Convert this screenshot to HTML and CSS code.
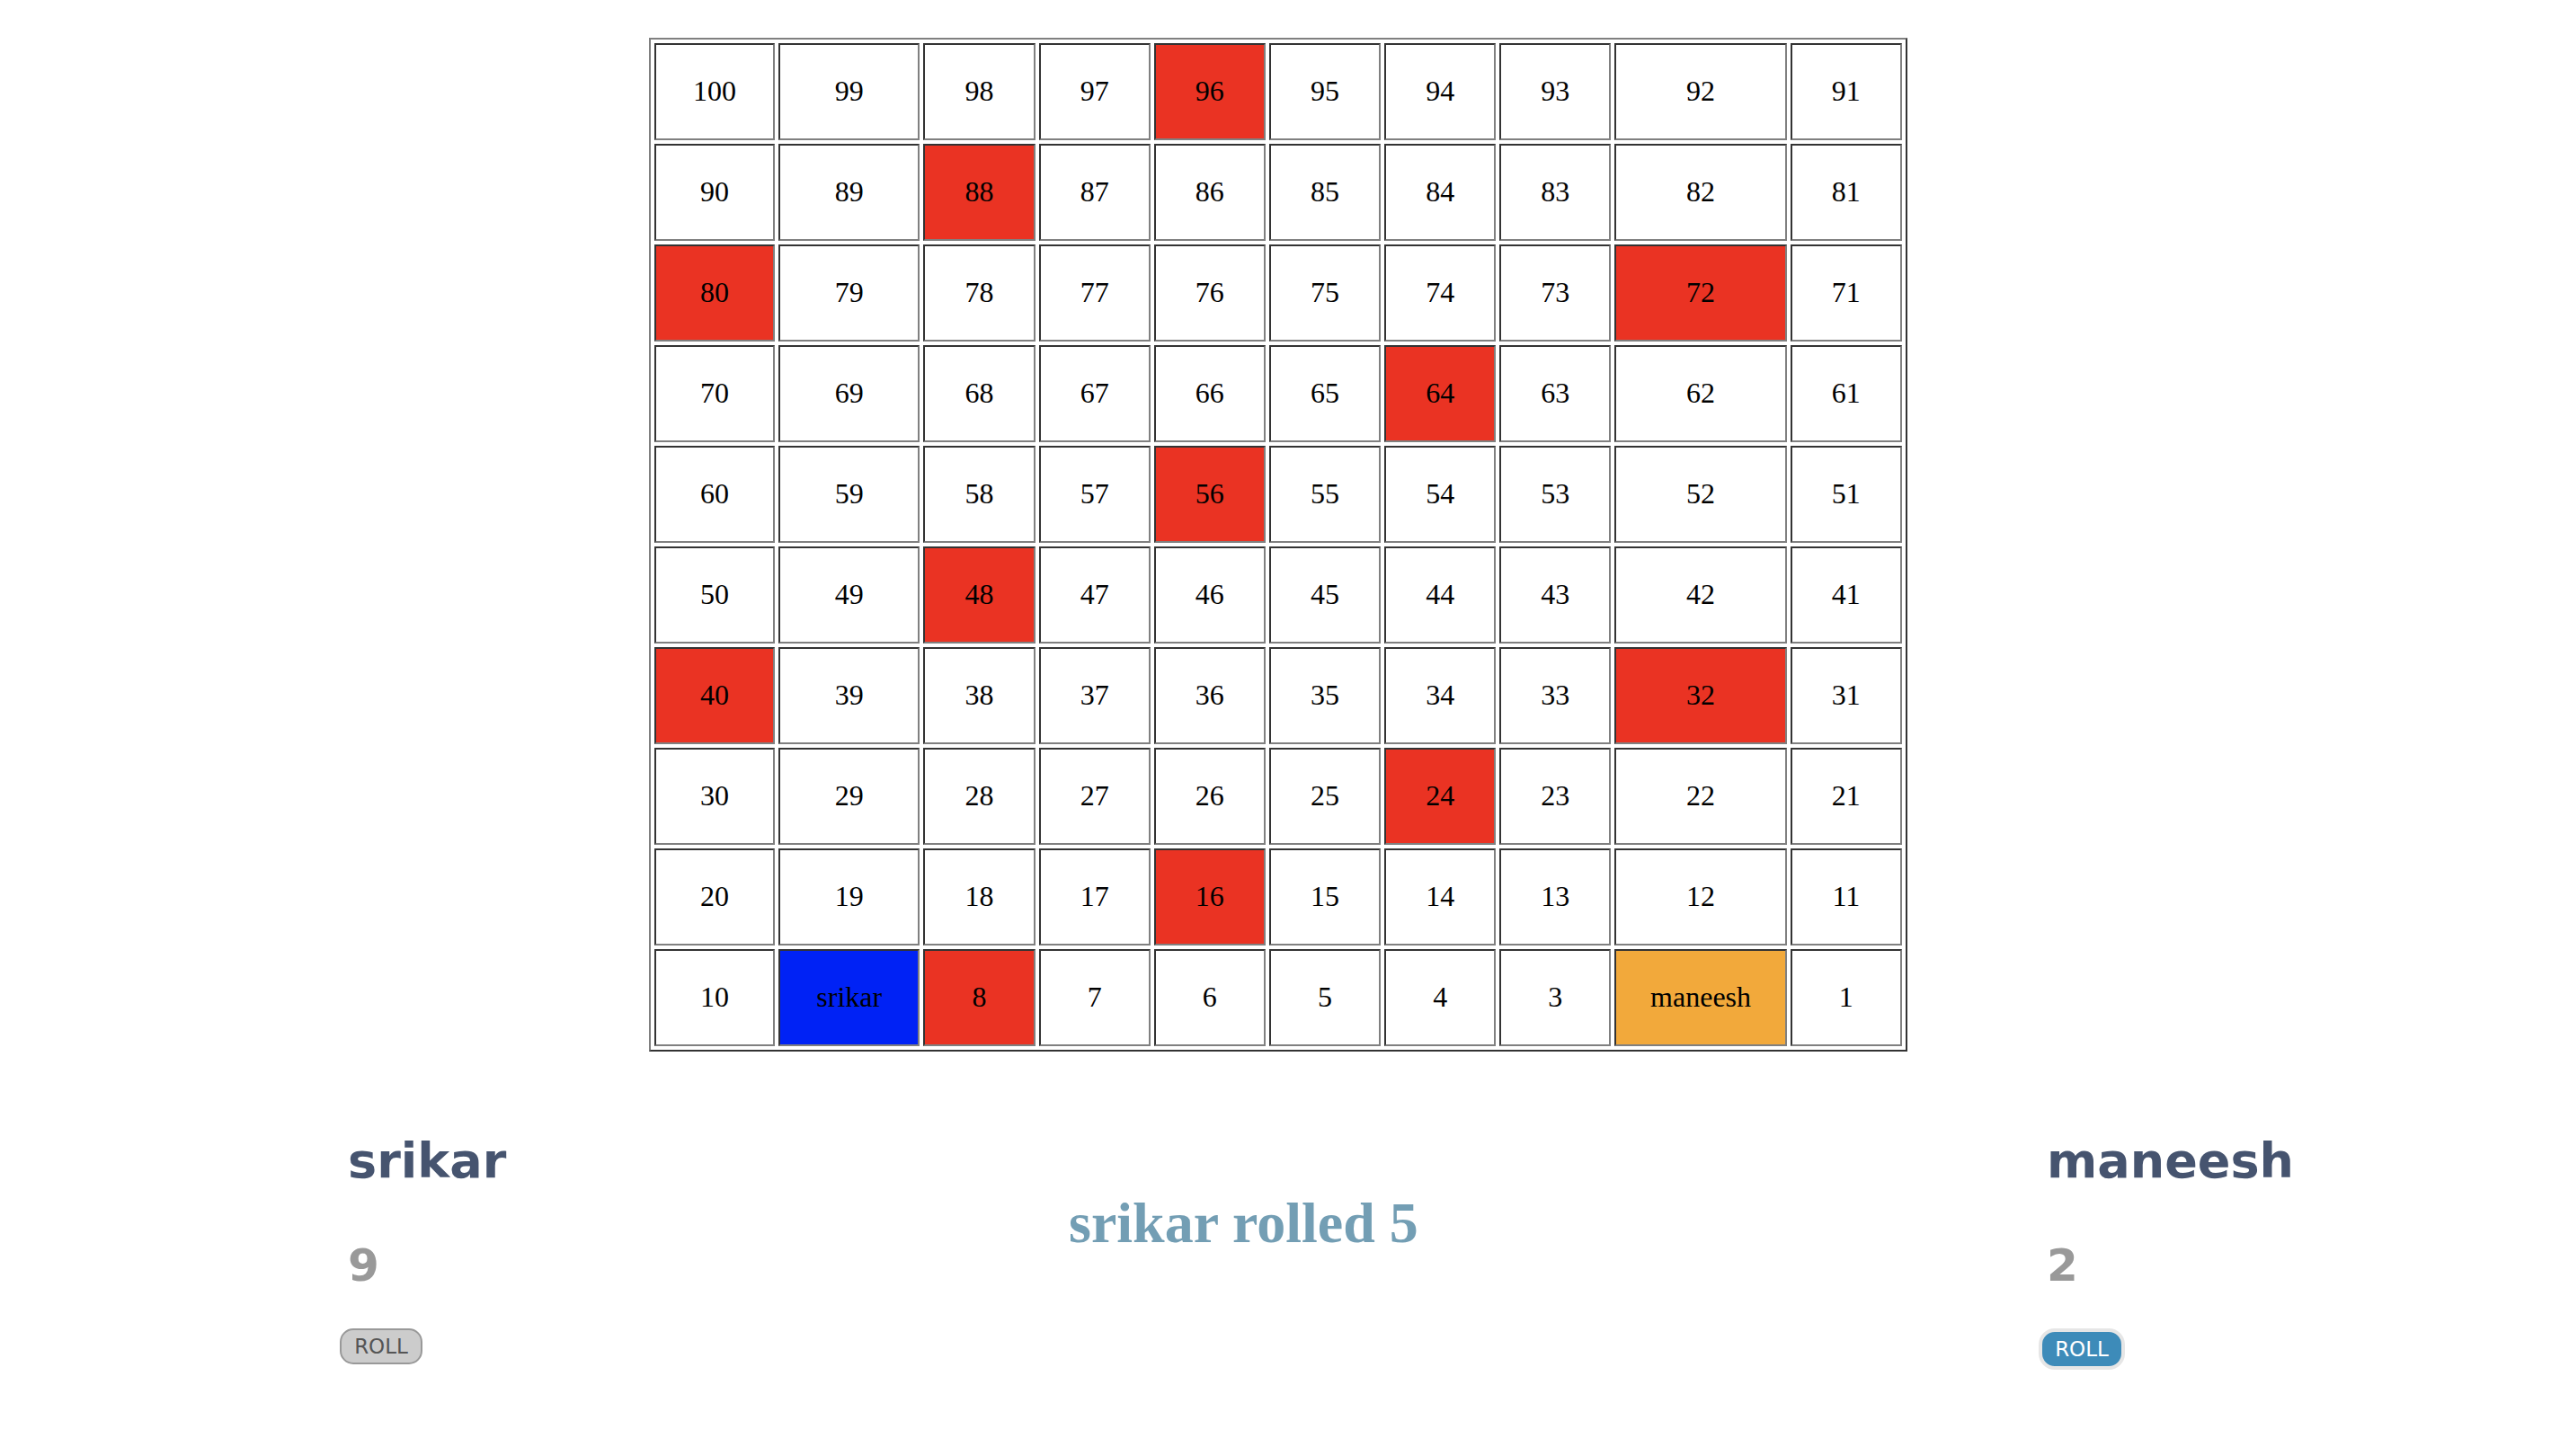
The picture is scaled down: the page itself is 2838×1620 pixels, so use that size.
FILE: index.html
```html
<!DOCTYPE html>
<html>
<head>
<meta charset="utf-8">
<title>Snakes</title>
<link rel="stylesheet" href="styles.css">
</head>
<body>
<div class="board-wrap">
<table class="board">
<tr><td class="w1">100</td><td class="w2">99</td><td class="wn">98</td><td class="wn">97</td><td class="wn red">96</td><td class="wn">95</td><td class="wn">94</td><td class="wn">93</td><td class="w9">92</td><td class="wn">91</td></tr>
<tr><td>90</td><td>89</td><td class="red">88</td><td>87</td><td>86</td><td>85</td><td>84</td><td>83</td><td>82</td><td>81</td></tr>
<tr><td class="red">80</td><td>79</td><td>78</td><td>77</td><td>76</td><td>75</td><td>74</td><td>73</td><td class="red">72</td><td>71</td></tr>
<tr><td>70</td><td>69</td><td>68</td><td>67</td><td>66</td><td>65</td><td class="red">64</td><td>63</td><td>62</td><td>61</td></tr>
<tr><td>60</td><td>59</td><td>58</td><td>57</td><td class="red">56</td><td>55</td><td>54</td><td>53</td><td>52</td><td>51</td></tr>
<tr><td>50</td><td>49</td><td class="red">48</td><td>47</td><td>46</td><td>45</td><td>44</td><td>43</td><td>42</td><td>41</td></tr>
<tr><td class="red">40</td><td>39</td><td>38</td><td>37</td><td>36</td><td>35</td><td>34</td><td>33</td><td class="red">32</td><td>31</td></tr>
<tr><td>30</td><td>29</td><td>28</td><td>27</td><td>26</td><td>25</td><td class="red">24</td><td>23</td><td>22</td><td>21</td></tr>
<tr><td>20</td><td>19</td><td>18</td><td>17</td><td class="red">16</td><td>15</td><td>14</td><td>13</td><td>12</td><td>11</td></tr>
<tr><td>10</td><td class="p1">srikar</td><td class="red">8</td><td>7</td><td>6</td><td>5</td><td>4</td><td>3</td><td class="p2">maneesh</td><td>1</td></tr>
</table>
</div>

<div class="players">
  <div class="player">
    <div class="pname">srikar</div>
    <div class="pscore">9</div>
    <button class="roll roll-off">ROLL</button>
  </div>
  <div class="message">srikar rolled 5</div>
  <div class="player">
    <div class="pname">maneesh</div>
    <div class="pscore">2</div>
    <button class="roll roll-on">ROLL</button>
  </div>
</div>
</body>
</html>
```

FILE: styles.css
```css
html, body {
  margin: 0;
  padding: 0;
  background: #ffffff;
}

.board-wrap {
  padding: 42px 0 0 722px;
}

.board {
  table-layout: fixed;
  width: 1400px;
  border-collapse: separate;
  border-spacing: 4px;
  border: 2px solid;
  border-color: #808080 #333333 #333333 #808080;
  font-family: "Liberation Serif", "Times New Roman", serif;
  font-size: 32px;
  color: #000;
}

.board tr {
  height: 108px;
}

.board td {
  padding: 1px 2px 3px;
  border: 2px solid;
  border-color: #333333 #808080 #808080 #333333;
  text-align: center;
  vertical-align: middle;
  background: #ffffff;
}

.board td.w1 { width: 126px; }
.board td.w2 { width: 149px; }
.board td.wn { width: 116px; }
.board td.w9 { width: 183px; }

.board td.red { background: #ea3323; }
.board td.p1 { background: #0022f5; }
.board td.p2 { background: #f2a93b; }

.players {
  display: grid;
  grid-template-columns: 811px 1079px auto;
  align-items: start;
  margin-top: 91px;
  padding-left: 378px;
}

.player {
  display: flex;
  flex-direction: column;
  align-items: flex-start;
}

.pname {
  font-family: "DejaVu Sans", sans-serif;
  font-weight: bold;
  font-size: 54px;
  line-height: 62px;
  color: #46546f;
  padding-left: 9px;
}

.pscore {
  font-family: "DejaVu Sans", sans-serif;
  font-weight: bold;
  font-size: 50px;
  line-height: 60px;
  color: #999999;
  margin-top: 55px;
  padding-left: 9px;
}

.roll {
  margin-top: 40px;
  font-family: "DejaVu Sans", sans-serif;
  font-size: 23px;
  line-height: 1;
  padding: 0;
  display: flex;
  align-items: center;
  justify-content: center;
  box-sizing: border-box;
}

.roll-off {
  width: 92px;
  height: 40px;
  background: #cccccc;
  border: 2px solid #999999;
  border-radius: 15px;
  color: #555555;
}

.roll-on {
  width: 96px;
  height: 46px;
  background: #3d8bb9;
  border: 4.5px solid #e6e6e6;
  border-radius: 18px;
  color: #ffffff;
}

.message {
  margin-top: 64px;
  font-family: "Liberation Serif", "Times New Roman", serif;
  font-weight: bold;
  font-size: 64px;
  line-height: 72px;
  color: #739eb4;
  white-space: nowrap;
}
```
